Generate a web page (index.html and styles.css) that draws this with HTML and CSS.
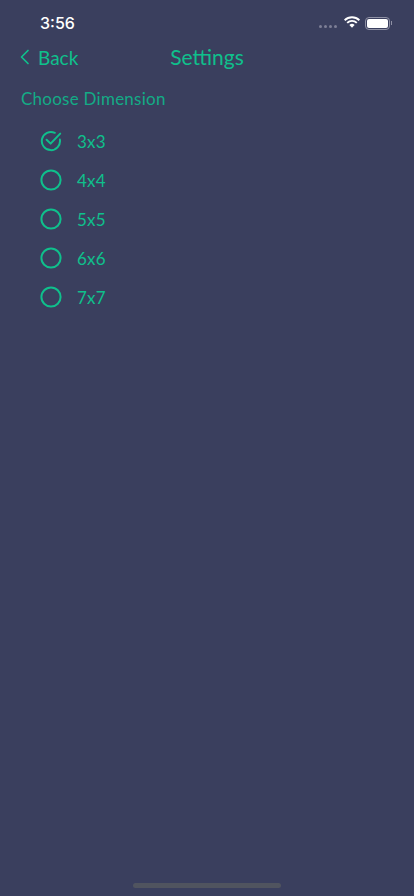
FILE: index.html
```html
<!DOCTYPE html>
<html>
<head>
    <title>Settings</title>
    <link rel="stylesheet" href="styles.css">
</head>
<body>
    <div class="screen">
        <div class="status-bar">
            <span class="time">3:56</span>
            <div class="status-icons">
                <div class="signal">
                    <span></span><span></span><span></span><span></span>
                </div>
                <svg class="wifi" width="16" height="12" viewBox="0 0 16 12">
                    <path d="M0.6 4.2 A10.6 10.6 0 0 1 15.4 4.2" fill="none" stroke="#fff" stroke-width="1.9"/>
                    <path d="M3.2 6.9 A6.8 6.8 0 0 1 12.8 6.9" fill="none" stroke="#fff" stroke-width="1.9"/>
                    <path d="M8 11.8 L5.4 9 A3.6 3.6 0 0 1 10.6 9 Z" fill="#fff"/>
                </svg>
                <div class="battery">
                    <div class="battery-level"></div>
                </div>
                <div class="battery-cap"></div>
            </div>
        </div>

        <div class="nav-bar">
            <div class="back">
                <svg width="10" height="16" viewBox="0 0 10 16">
                    <path d="M8 1.5 L1.5 8 L8 14.5" fill="none" stroke="#0fc08c" stroke-width="1.7" stroke-linecap="round" stroke-linejoin="round"/>
                </svg>
                <span>Back</span>
            </div>
            <h1 class="title">Settings</h1>
        </div>

        <p class="section-label">Choose Dimension</p>

        <div class="options">
            <div class="option">
                <svg class="radio" width="22" height="22" viewBox="0 0 22 22">
                    <path d="M19.9 9.6 A9.1 9.1 0 1 1 14.8 2.8" fill="none" stroke="#0fc08c" stroke-width="2" stroke-linecap="round"/>
                    <path d="M6.6 9.8 L10.6 13.6 L20.2 3.6" fill="none" stroke="#0fc08c" stroke-width="2" stroke-linecap="round" stroke-linejoin="round"/>
                </svg>
                <span>3x3</span>
            </div>
            <div class="option">
                <svg class="radio" width="22" height="22" viewBox="0 0 22 22">
                    <circle cx="11" cy="11" r="9.6" fill="none" stroke="#0fc08c" stroke-width="2"/>
                </svg>
                <span>4x4</span>
            </div>
            <div class="option">
                <svg class="radio" width="22" height="22" viewBox="0 0 22 22">
                    <circle cx="11" cy="11" r="9.6" fill="none" stroke="#0fc08c" stroke-width="2"/>
                </svg>
                <span>5x5</span>
            </div>
            <div class="option">
                <svg class="radio" width="22" height="22" viewBox="0 0 22 22">
                    <circle cx="11" cy="11" r="9.6" fill="none" stroke="#0fc08c" stroke-width="2"/>
                </svg>
                <span>6x6</span>
            </div>
            <div class="option">
                <svg class="radio" width="22" height="22" viewBox="0 0 22 22">
                    <circle cx="11" cy="11" r="9.6" fill="none" stroke="#0fc08c" stroke-width="2"/>
                </svg>
                <span>7x7</span>
            </div>
        </div>

        <div class="home-indicator"></div>
    </div>
</body>
</html>
```

FILE: styles.css
```css
html, body {
    margin: 0;
    height: 100%;
}
body {
    background-color: #3a3f5e;
    font-family: Lato, "Open Sans", sans-serif;
    color: #0fc08c;
    overflow: hidden;
}
.screen {
    height: 896px;
    display: flex;
    flex-direction: column;
}
.status-bar {
    height: 46px;
    box-sizing: border-box;
    padding: 14px 22px 0 40px;
    display: flex;
    justify-content: space-between;
    align-items: flex-start;
}
.time {
    color: #fff;
    font-family: Inter, sans-serif;
    font-size: 16px;
    font-weight: 500;
    line-height: 18px;
}
.status-icons {
    display: flex;
    align-items: center;
    height: 18px;
}
.signal {
    display: flex;
    gap: 2px;
    margin-top: 6px;
    margin-right: 7px;
}
.signal span {
    width: 3px;
    height: 3px;
    border-radius: 50%;
    background-color: #7d7f96;
}
.wifi {
    margin-right: 5px;
    margin-top: -2px;
}
.battery {
    width: 25px;
    height: 13px;
    box-sizing: border-box;
    border: 1px solid #8f91a5;
    border-radius: 4px;
    padding: 1px;
}
.battery-level {
    height: 100%;
    background-color: #fff;
    border-radius: 2px;
}
.battery-cap {
    width: 1px;
    height: 4px;
    margin-left: 1px;
    background-color: #8f91a5;
}
.nav-bar {
    position: relative;
    height: 22px;
    display: flex;
    align-items: center;
    justify-content: center;
}
.back {
    position: absolute;
    left: 20px;
    top: 0;
    height: 22px;
    display: flex;
    align-items: center;
    gap: 8px;
    font-size: 19px;
}
.title {
    margin: 0;
    font-size: 21px;
    font-weight: 400;
    line-height: 22px;
}
.section-label {
    margin: 20px 0 0 21px;
    font-size: 17px;
    line-height: 22px;
    letter-spacing: 0.25px;
    color: #13ab86;
}
.options {
    margin-top: 20px;
    padding-left: 40px;
    display: flex;
    flex-direction: column;
    gap: 17px;
}
.option {
    height: 22px;
    display: flex;
    align-items: center;
    gap: 15px;
    font-size: 17px;
    letter-spacing: 0.2px;
}
.home-indicator {
    width: 148px;
    height: 5px;
    border-radius: 3px;
    background-color: #50545f;
    margin: auto auto 8px;
}
```
